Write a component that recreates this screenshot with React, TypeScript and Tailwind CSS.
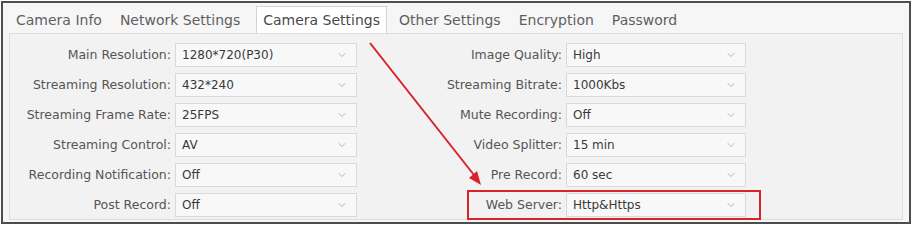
import { ChevronDown } from "lucide-react";

const TABS = ["Camera Info", "Network Settings", "Camera Settings", "Other Settings", "Encryption", "Password"];

const LEFT = [
  ["Main Resolution:", "1280*720(P30)"],
  ["Streaming Resolution:", "432*240"],
  ["Streaming Frame Rate:", "25FPS"],
  ["Streaming Control:", "AV"],
  ["Recording Notification:", "Off"],
  ["Post Record:", "Off"],
];

const RIGHT = [
  ["Image Quality:", "High"],
  ["Streaming Bitrate:", "1000Kbs"],
  ["Mute Recording:", "Off"],
  ["Video Splitter:", "15 min"],
  ["Pre Record:", "60 sec"],
  ["Web Server:", "Http&Https"],
];

function Field({ label, value, labelW, selectW }: { label: string; value: string; labelW: string; selectW: string }) {
  return (
    <div className="flex h-6 items-center gap-[4px]">
      <span className={`${labelW} shrink-0 whitespace-nowrap text-right text-[12.5px] text-[#555]`}>{label}</span>
      <div
        className={`${selectW} flex h-6 items-center justify-between border border-[#d9d9d9] bg-[#f8f8f8] pl-[6px] pr-2 text-[12px] text-[#3a3a3a]`}
      >
        <span>{value}</span>
        <ChevronDown size={12} strokeWidth={1.5} className="text-[#a0a0a0]" />
      </div>
    </div>
  );
}

export default function App() {
  return (
    <div className="h-[226px] w-[912px] bg-white" style={{ fontFamily: '"DejaVu Sans", Tahoma, sans-serif' }}>
      <div className="relative ml-px mt-px flex h-[223px] w-[910px] flex-col border-2 border-[#4d4d4d] bg-[#f6f6f6]">
        {/* tab strip */}
        <div className="flex h-[30px] items-end gap-[2px] pl-[5px] text-[14px] text-[#5f5f5f]">
          {TABS.map((t) => (
            <div
              key={t}
              className={
                t === "Camera Settings"
                  ? "-mb-px ml-[6px] mr-[2px] flex h-[28px] items-center border border-b-0 border-[#d4d4d4] bg-white px-[6px] text-[#4a4a4a]"
                  : "flex h-[26px] items-center px-[8px]"
              }
            >
              {t}
            </div>
          ))}
        </div>

        {/* panel */}
        <div className="mx-[6px] mb-[2px] flex flex-1 gap-[41px] border border-[#dedede] bg-[#f2f2f2] pt-[9px]">
          <div className="flex flex-col gap-[6px] pl-[3px]">
            {LEFT.map(([l, v]) => (
              <Field key={l} label={l} value={v} labelW="w-[158px]" selectW="w-[182px]" />
            ))}
          </div>
          <div className="flex flex-col gap-[6px]">
            {RIGHT.map(([l, v]) => (
              <Field key={l} label={l} value={v} labelW="w-[164px]" selectW="w-[180px]" />
            ))}
          </div>
        </div>

        {/* highlight box on Web Server row */}
        <div className="pointer-events-none absolute left-[464px] top-[187px] h-[30px] w-[294px] border-2 border-[#d8232a]" />

        {/* arrow */}
        <svg className="pointer-events-none absolute left-0 top-0" width="906" height="219">
          <line x1="367" y1="40" x2="471" y2="172" stroke="#d8232a" strokeWidth="2" />
          <polygon points="478,182 466,175 474,168" fill="#d8232a" />
        </svg>
      </div>
    </div>
  );
}
